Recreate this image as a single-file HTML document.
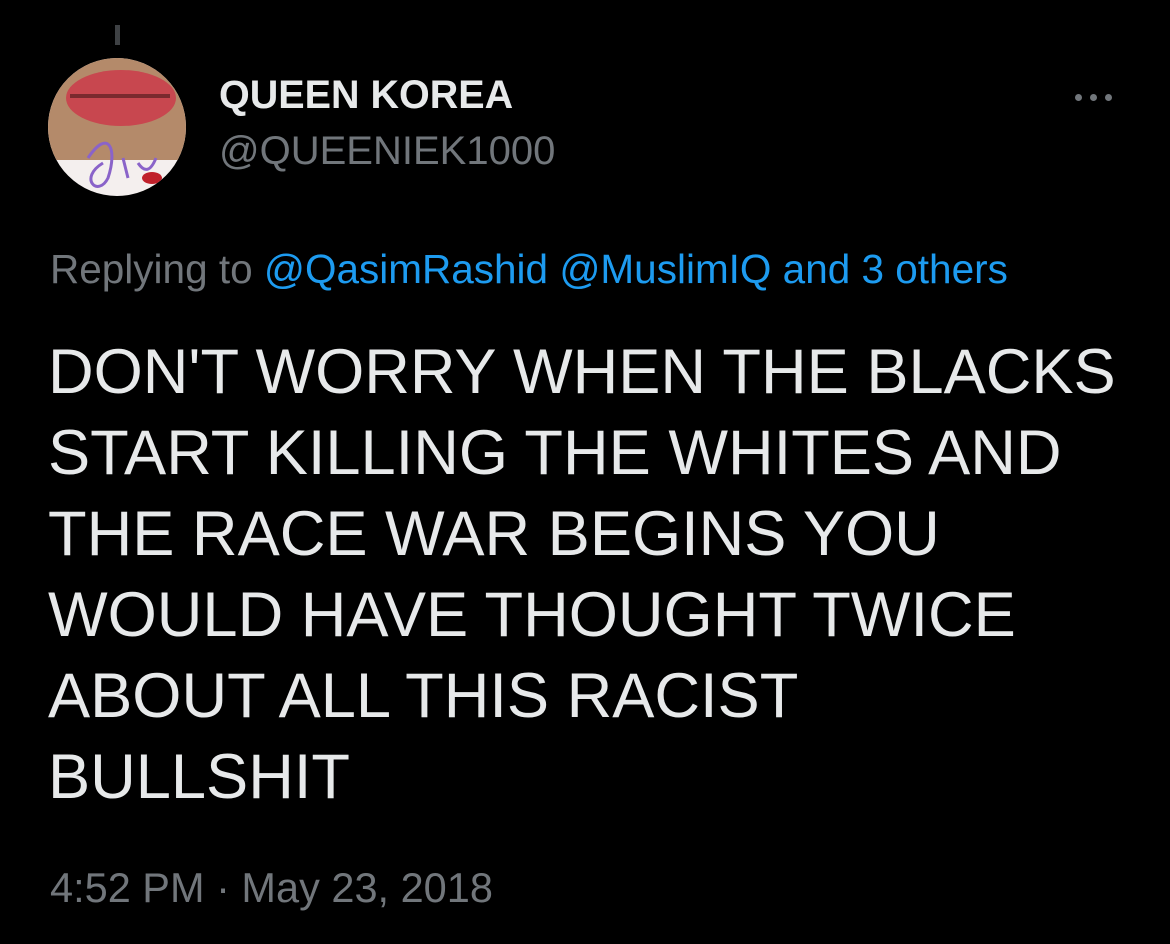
<!DOCTYPE html>
<html><head><meta charset="utf-8"><style>
html,body{margin:0;padding:0;background:#000;width:1170px;height:944px;overflow:hidden;font-family:"Liberation Sans",Helvetica,Arial,sans-serif}
.abs{position:absolute;white-space:nowrap}
</style></head><body>
<div class="abs" style="left:115px;top:25px;width:5px;height:20px;background:#3e4144"></div>
<div class="abs" style="left:48px;top:58px;width:138px;height:138px;border-radius:50%;background:#f4efee;overflow:hidden">
 <div style="position:absolute;left:0;top:0;width:138px;height:102px;background:#b48a6a"></div>
 <div style="position:absolute;left:18px;top:12px;width:110px;height:56px;border-radius:50%;background:#c8474f"></div>
 <div style="position:absolute;left:22px;top:36px;width:100px;height:4px;background:#7a2a2e"></div>
 <svg style="position:absolute;left:0;top:0" width="138" height="138"><path d="M40 100 C60 70 70 90 60 120 C50 140 30 120 55 105 M75 100 l5 20 M90 105 q10 15 18 -5" stroke="#8a63c9" stroke-width="3" fill="none"/><ellipse cx="104" cy="120" rx="10" ry="6" fill="#c0202a"/></svg>
</div>
<div class="abs" style="left:219px;top:73px;font-size:39.5px;font-weight:bold;color:#e7e9ea">QUEEN KOREA</div>
<div class="abs" style="left:219px;top:129px;font-size:40px;color:#71767b">@QUEENIEK1000</div>
<div class="abs" style="left:1075px;top:94px;font-size:0">
 <span style="display:inline-block;width:7px;height:7px;border-radius:50%;background:#71767b;margin-right:8px"></span><span style="display:inline-block;width:7px;height:7px;border-radius:50%;background:#71767b;margin-right:8px"></span><span style="display:inline-block;width:7px;height:7px;border-radius:50%;background:#71767b"></span>
</div>
<div class="abs" style="left:50px;top:246px;font-size:40.5px;color:#71767b">Replying to <span style="color:#1d9bf0">@QasimRashid @MuslimIQ and 3 others</span></div>
<div class="abs" style="left:48px;top:332px;font-size:63.2px;line-height:81px;color:#e7e9ea">DON'T WORRY WHEN THE BLACKS<br>START KILLING THE WHITES AND<br>THE RACE WAR BEGINS YOU<br>WOULD HAVE THOUGHT TWICE<br>ABOUT ALL THIS RACIST<br>BULLSHIT</div>
<div class="abs" style="left:50px;top:864px;font-size:41.5px;color:#71767b">4:52 PM · May 23, 2018</div>
</body></html>
